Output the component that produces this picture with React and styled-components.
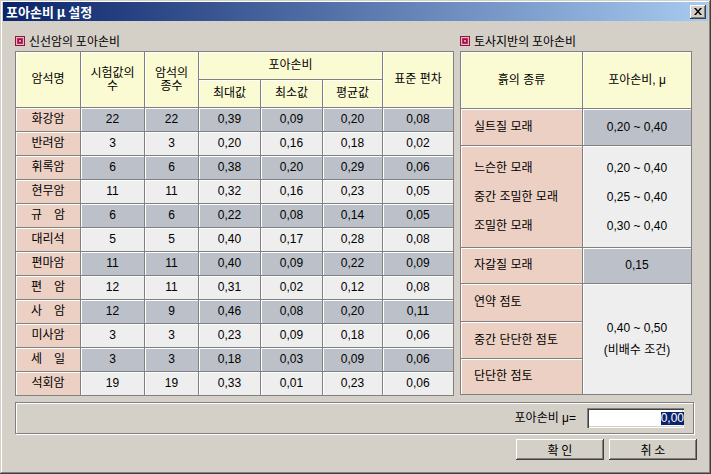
import React from "react";
import styled, { createGlobalStyle } from "styled-components";

const GlobalStyle = createGlobalStyle`
  html, body { margin: 0; padding: 0; background: #d4d0c8; }
  body {
    font-family: "Liberation Sans", "Noto Sans CJK KR", sans-serif;
    font-size: 12px;
    color: #000;
  }
  * { box-sizing: border-box; }
`;

const C = {
  face: "#d4d0c8",
  line: "#808080",
  dark: "#404040",
  header: "#fbfbd3",
  pink: "#ecd0c4",
  gray: "#bcc0c8",
  light: "#eeeeee",
};

const Window = styled.div`
  width: 711px;
  height: 474px;
  background: ${C.face};
  display: flex;
  flex-direction: column;
  box-shadow: inset -1px -1px 0 ${C.dark}, inset 1px 1px 0 ${C.face},
    inset -2px -2px 0 ${C.line}, inset 2px 2px 0 #fff;
`;

const TitleBar = styled.div`
  margin: 2px 3px 0 3px;
  height: 19px;
  background: linear-gradient(to right, #0a246a, #a6caf0);
  display: flex;
  align-items: center;
  justify-content: space-between;
  padding: 0 2px 0 3px;
  color: #fff;
  font-weight: bold;
  font-size: 13px;
  font-family: "Noto Sans CJK KR", sans-serif;
`;

const TitleText = styled.span`
  line-height: 19px;
`;

const CloseButton = styled.div`
  width: 16px;
  height: 14px;
  background: ${C.face};
  display: flex;
  align-items: center;
  justify-content: center;
  box-shadow: inset -1px -1px 0 ${C.dark}, inset 1px 1px 0 #fff,
    inset -2px -2px 0 ${C.line};
`;

const Content = styled.div`
  padding: 9px 0 0 15px;
  display: flex;
  flex-direction: column;
`;

const Sections = styled.div`
  display: flex;
  gap: 6px;
`;

const Section = styled.div`
  display: flex;
  flex-direction: column;
`;

const SectionLabel = styled.div`
  height: 21px;
  display: flex;
  align-items: center;
  gap: 4px;
  font-family: "Noto Sans CJK KR", sans-serif;
  font-size: 12px;
`;

const Grid = styled.div`
  display: grid;
  grid-template-columns: ${(p) => p.$cols};
  grid-template-rows: ${(p) => p.$rows};
  gap: 1px;
  padding: 1px;
  background: ${C.line};
  width: max-content;
`;

const Cell = styled.div`
  background: ${(p) => p.$bg};
  box-shadow: inset 1px 1px 0 #fff;
  display: flex;
  flex-direction: column;
  align-items: ${(p) => (p.$left ? "flex-start" : "center")};
  justify-content: center;
  text-align: ${(p) => (p.$left ? "left" : "center")};
  padding-left: ${(p) => (p.$left ? "13px" : "0")};
  line-height: ${(p) => p.$lh || "13px"};
  grid-row: ${(p) => (p.$rowSpan ? `span ${p.$rowSpan}` : "auto")};
  grid-column: ${(p) => (p.$colSpan ? `span ${p.$colSpan}` : "auto")};
  gap: ${(p) => p.$gap || "0"};
  white-space: nowrap;
`;

const GroupBox = styled.div`
  margin-top: 6px;
  width: 679px;
  height: 32px;
  border: 1px solid ${C.line};
  box-shadow: inset 1px 1px 0 #fff, 1px 1px 0 #fff;
  display: flex;
  align-items: center;
  justify-content: flex-end;
  padding-right: 9px;
  gap: 11px;
`;

const FieldLabel = styled.span`
  line-height: 14px;
`;

const Field = styled.div`
  width: 97px;
  height: 20px;
  background: #fff;
  box-shadow: inset 1px 1px 0 ${C.line}, inset 2px 2px 0 ${C.dark},
    inset -1px -1px 0 #fff, inset -2px -2px 0 ${C.face};
  display: flex;
  align-items: center;
  justify-content: flex-end;
  padding-right: 2px;
  overflow: hidden;
`;

const Selected = styled.span`
  background: #0a246a;
  color: #fff;
  line-height: 13px;
  margin-right: -2px;
`;

const ButtonRow = styled.div`
  margin-top: 5px;
  width: 682px;
  display: flex;
  justify-content: flex-end;
  gap: 5px;
`;

const Button = styled.button`
  width: 88px;
  height: 21px;
  border: none;
  padding: 0;
  background: ${C.face};
  font-family: "Noto Sans CJK KR", sans-serif;
  font-size: 12px;
  color: #000;
  box-shadow: inset -1px -1px 0 ${C.dark}, inset 1px 1px 0 #fff,
    inset -2px -2px 0 ${C.line};
`;

const Icon = () => (
  <svg width="10" height="10" viewBox="0 0 10 10">
    <rect x="0" y="0" width="10" height="10" fill="#8a1840" />
    <rect x="1.5" y="1.5" width="7" height="7" fill="#c03060" stroke="#f0b0c8" strokeWidth="1" />
    <rect x="3" y="3" width="4" height="4" fill="#8a1840" />
    <rect x="4" y="4" width="2" height="2" fill="#e890b0" />
  </svg>
);

const rocks = [
  ["화강암", "22", "22", "0,39", "0,09", "0,20", "0,08"],
  ["반려암", "3", "3", "0,20", "0,16", "0,18", "0,02"],
  ["휘록암", "6", "6", "0,38", "0,20", "0,29", "0,06"],
  ["현무암", "11", "11", "0,32", "0,16", "0,23", "0,05"],
  ["규\u3000암", "6", "6", "0,22", "0,08", "0,14", "0,05"],
  ["대리석", "5", "5", "0,40", "0,17", "0,28", "0,08"],
  ["편마암", "11", "11", "0,40", "0,09", "0,22", "0,09"],
  ["편\u3000암", "12", "11", "0,31", "0,02", "0,12", "0,08"],
  ["사\u3000암", "12", "9", "0,46", "0,08", "0,20", "0,11"],
  ["미사암", "3", "3", "0,23", "0,09", "0,18", "0,06"],
  ["세\u3000일", "3", "3", "0,18", "0,03", "0,09", "0,06"],
  ["석회암", "19", "19", "0,33", "0,01", "0,23", "0,06"],
];

export default function App() {
  return (
    <>
      <GlobalStyle />
      <Window>
        <TitleBar>
          <TitleText>포아손비 μ 설정</TitleText>
          <CloseButton>
            <svg width="8" height="7" viewBox="0 0 8 7">
              <path d="M0 0h2l2 2.5L6 0h2L5 3.5 8 7H6L4 4.5 2 7H0l3-3.5z" fill="#000" />
            </svg>
          </CloseButton>
        </TitleBar>
        <Content>
          <Sections>
            <Section>
              <SectionLabel>
                <Icon />
                <span>신선암의 포아손비</span>
              </SectionLabel>
              <Grid
                $cols="64px 63px 53px 61px 61px 59px 70px"
                $rows="27px 27px repeat(12, 23px)"
              >
                <Cell $bg={C.header} $rowSpan={2}>암석명</Cell>
                <Cell $bg={C.header} $rowSpan={2}>시험값의<br />수</Cell>
                <Cell $bg={C.header} $rowSpan={2}>암석의<br />종수</Cell>
                <Cell $bg={C.header} $colSpan={3}>포아손비</Cell>
                <Cell $bg={C.header} $rowSpan={2}>표준 편차</Cell>
                <Cell $bg={C.header}>최대값</Cell>
                <Cell $bg={C.header}>최소값</Cell>
                <Cell $bg={C.header}>평균값</Cell>
                {rocks.map((r, i) =>
                  r.map((v, j) => (
                    <Cell
                      key={`${i}-${j}`}
                      $bg={j === 0 ? C.pink : i % 2 === 0 ? C.gray : C.light}
                    >
                      {v}
                    </Cell>
                  ))
                )}
              </Grid>
            </Section>
            <Section>
              <SectionLabel>
                <Icon />
                <span>토사지반의 포아손비</span>
              </SectionLabel>
              <Grid
                $cols="121px 108px"
                $rows="56px 36px 101px 35px 37px 36px 35px"
              >
                <Cell $bg={C.header}>흙의 종류</Cell>
                <Cell $bg={C.header}>포아손비, μ</Cell>
                <Cell $bg={C.pink} $left>실트질 모래</Cell>
                <Cell $bg={C.gray}>0,20 ~ 0,40</Cell>
                <Cell $bg={C.pink} $left $gap="15px" $lh="14px">
                  <span>느슨한 모래</span>
                  <span>중간 조밀한 모래</span>
                  <span>조밀한 모래</span>
                </Cell>
                <Cell $bg={C.light} $gap="15px" $lh="14px">
                  <span>0,20 ~ 0,40</span>
                  <span>0,25 ~ 0,40</span>
                  <span>0,30 ~ 0,40</span>
                </Cell>
                <Cell $bg={C.pink} $left>자갈질 모래</Cell>
                <Cell $bg={C.gray}>0,15</Cell>
                <Cell $bg={C.pink} $left>연약 점토</Cell>
                <Cell $bg={C.light} $rowSpan={3} $lh="22px">
                  <span>0,40 ~ 0,50</span>
                  <span>(비배수 조건)</span>
                </Cell>
                <Cell $bg={C.pink} $left>중간 단단한 점토</Cell>
                <Cell $bg={C.pink} $left>단단한 점토</Cell>
              </Grid>
            </Section>
          </Sections>
          <GroupBox>
            <FieldLabel>포아손비 μ=</FieldLabel>
            <Field>
              <Selected>0,00</Selected>
            </Field>
          </GroupBox>
          <ButtonRow>
            <Button>확 인</Button>
            <Button>취 소</Button>
          </ButtonRow>
        </Content>
      </Window>
    </>
  );
}
